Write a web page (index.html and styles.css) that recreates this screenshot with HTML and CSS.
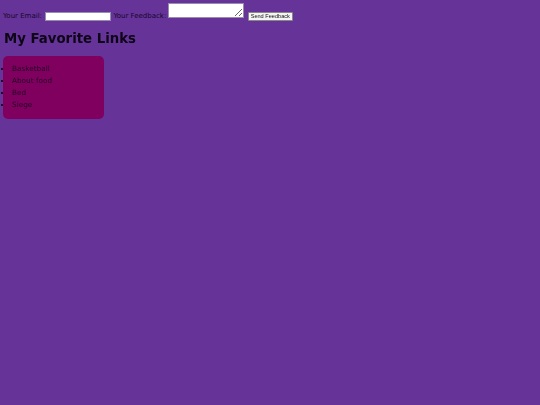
FILE: index.html
```html
<!DOCTYPE html>
<html>
<head>
<meta charset="utf-8">
<link rel="stylesheet" href="styles.css">
</head>
<body>
<form class="feedback">
  <label class="lbl">Your Email:</label>
  <input class="email" type="text">
  <label class="lbl">Your Feedback:</label>
  <textarea class="msg"></textarea>
  <button class="send" type="button">Send Feedback</button>
</form>
<h1 class="title">My Favorite Links</h1>
<ul class="links">
  <li><a href="#">Basketball</a></li>
  <li><a href="#">About food</a></li>
  <li><a href="#">Bed</a></li>
  <li><a href="#">Siege</a></li>
</ul>
</body>
</html>
```
FILE: styles.css
```css
html, body {
  margin: 0;
  background: #663399;
}
body {
  padding: 3px 3px;
  font-family: "DejaVu Sans", Verdana, sans-serif;
  font-size: 7px;
  color: #1a0a33;
}
.feedback {
  margin: 0;
  line-height: 9px;
}
.lbl {
  font-size: 7px;
  color: #14082a;
}
.email {
  box-sizing: border-box;
  width: 66px;
  height: 9px;
  padding: 0 1px;
  border: 1px solid #9a8ab0;
  background: #fff;
  font-size: 6px;
  margin: 0 0 0 1px;
  vertical-align: baseline;
}
.msg {
  box-sizing: border-box;
  width: 76px;
  height: 15px;
  padding: 1px;
  border: 1px solid #9a8ab0;
  background: #fff;
  margin: 0 0 0 -1px;
  vertical-align: baseline;
  resize: both;
}
.send {
  box-sizing: border-box;
  font-family: "Liberation Sans", Arial, sans-serif;
  font-size: 5.6px;
  height: 9px;
  width: 45px;
  padding: 0;
  line-height: 6px;
  background: #f4f4f4;
  border: 1px solid #888;
  border-radius: 1px;
  color: #111;
  margin-left: 2px;
}
.title {
  font-size: 13.3px;
  font-weight: bold;
  margin: 10px 0 0 1px;
  color: #0c0616;
  line-height: 16px;
}
.links {
  list-style: disc;
  margin: 9px 0 0 0;
  padding: 7px 0 8px 9px;
  width: 92px;
  background: #800060;
  border-radius: 5px;
  font-family: "DejaVu Sans", sans-serif;
  font-size: 7.3px;
  line-height: 12px;
}
.links li {
  color: #000;
  padding-left: 0;
}
.links a {
  color: #220024;
  text-decoration: none;
}
```
